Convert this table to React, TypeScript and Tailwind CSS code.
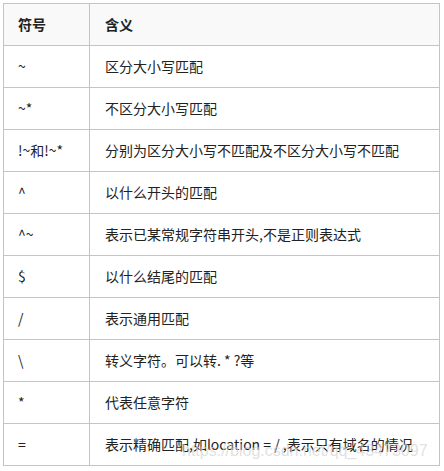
const rows: [string, string][] = [
  ["~", "区分大小写匹配"],
  ["~*", "不区分大小写匹配"],
  ["!~和!~*", "分别为区分大小写不匹配及不区分大小写不匹配"],
  ["^", "以什么开头的匹配"],
  ["^~", "表示已某常规字符串开头,不是正则表达式"],
  ["$", "以什么结尾的匹配"],
  ["/", "表示通用匹配"],
  ["\\", "转义字符。可以转. * ?等"],
  ["*", "代表任意字符"],
  ["=", "表示精确匹配,如location = / ,表示只有域名的情况"],
];

export default function App() {
  return (
    <div className="relative w-[444px] h-[471px] overflow-hidden bg-white pt-[3px] pl-[3px] font-['Noto_Sans_CJK_SC',sans-serif] text-[14px] text-[#222]">
      <table className="border-collapse w-[437px] table-fixed">
        <colgroup>
          <col className="w-[86px]" />
          <col />
        </colgroup>
        <thead>
          <tr className="h-[42px] bg-[#f9f9f9]">
            <th className="border border-[#c4c4c4] text-left font-bold pl-[14px] pr-2">符号</th>
            <th className="border border-[#c4c4c4] text-left font-bold pl-[15px] pr-2">含义</th>
          </tr>
        </thead>
        <tbody>
          {rows.map(([sym, desc]) => (
            <tr key={sym} className="h-[42px]">
              <td className="border border-[#c4c4c4] pl-[14px] pr-2 whitespace-nowrap">{sym}</td>
              <td className="border border-[#c4c4c4] pl-[15px] pr-1 whitespace-nowrap">{desc}</td>
            </tr>
          ))}
        </tbody>
      </table>
      <div className="absolute left-[182px] top-[443px] text-[16px] leading-none text-[#d4d4d4]/70 font-['Liberation_Sans',sans-serif] whitespace-nowrap pointer-events-none">
        https://blog.csdn.net/qq_43473097
      </div>
    </div>
  );
}
